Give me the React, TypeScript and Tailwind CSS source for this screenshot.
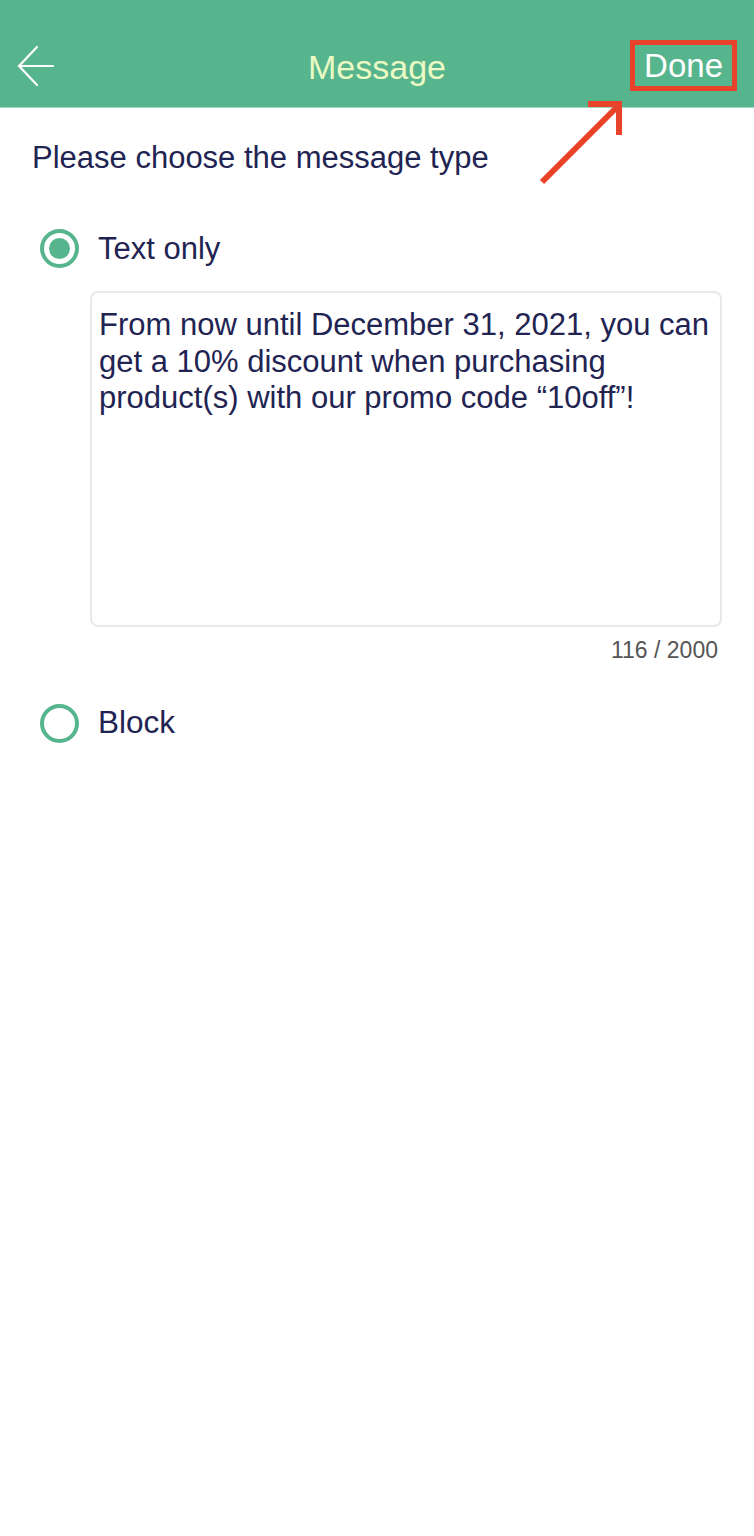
import React from "react";

function Radio({ checked }: { checked: boolean }) {
  return (
    <div className="w-[39px] h-[39px] rounded-full border-[4px] border-[#57b58e] flex items-center justify-center shrink-0">
      {checked && <div className="w-[21px] h-[21px] rounded-full bg-[#57b58e]" />}
    </div>
  );
}

export default function App() {
  return (
    <div className="relative w-[754px] min-h-[1536px] bg-white font-['Liberation_Sans',Arial,sans-serif] text-[#1f2452]">
      {/* Header */}
      <div className="h-[108px] pt-[24px] bg-[#57b58e] grid grid-cols-[1fr_auto_1fr] items-center border-b border-[#9fd6bd]">
        <div className="pl-[16px] flex items-center">
          <svg width="40" height="42" viewBox="0 0 40 42" fill="none">
            <path d="M37 21H3M21 2L3 21L21 40" stroke="#ffffff" strokeWidth="2.2" strokeLinecap="round" strokeLinejoin="miter" />
          </svg>
        </div>
        <div className="text-[34px] leading-none text-[#eafac2] pt-[2px]">Message</div>
        <div className="flex justify-end pr-[17px]">
          <div className="border-[5px] border-[#e8432a] h-[51px] px-[9px] flex items-center text-[33px] leading-none text-white">
            Done
          </div>
        </div>
      </div>

      {/* Annotation arrow */}
      <svg className="absolute left-[530px] top-[96px]" width="100" height="96" viewBox="530 96 100 96" fill="none">
        <path d="M542 182L619 105" stroke="#e8442b" strokeWidth="6" />
        <path d="M588 104H622M619 101V135" stroke="#e8442b" strokeWidth="6" />
      </svg>

      {/* Body */}
      <div className="pt-[32px]">
        <div className="pl-[32px] text-[31px] leading-[36px]">Please choose the message type</div>

        <div className="mt-[52px] pl-[40px] flex items-center gap-[19px] h-[40px]">
          <Radio checked />
          <span className="text-[31px] leading-none">Text only</span>
        </div>

        <div className="mt-[23px] ml-[90px] mr-[32px] h-[336px] rounded-[8px] border-2 border-[#e8e8e8] pt-[14px] pl-[7px] pr-[2px]">
          <p className="text-[31px] leading-[36.5px]">
            From now until December 31, 2021, you can get a 10% discount when purchasing product(s) with our promo code “10off”!
          </p>
        </div>

        <div className="mt-[10px] pr-[36px] text-right text-[23px] leading-[26px] text-[#555555]">116 / 2000</div>

        <div className="mt-[40px] pl-[40px] flex items-center gap-[19px] h-[40px]">
          <Radio checked={false} />
          <span className="text-[31.5px] leading-none">Block</span>
        </div>
      </div>
    </div>
  );
}
